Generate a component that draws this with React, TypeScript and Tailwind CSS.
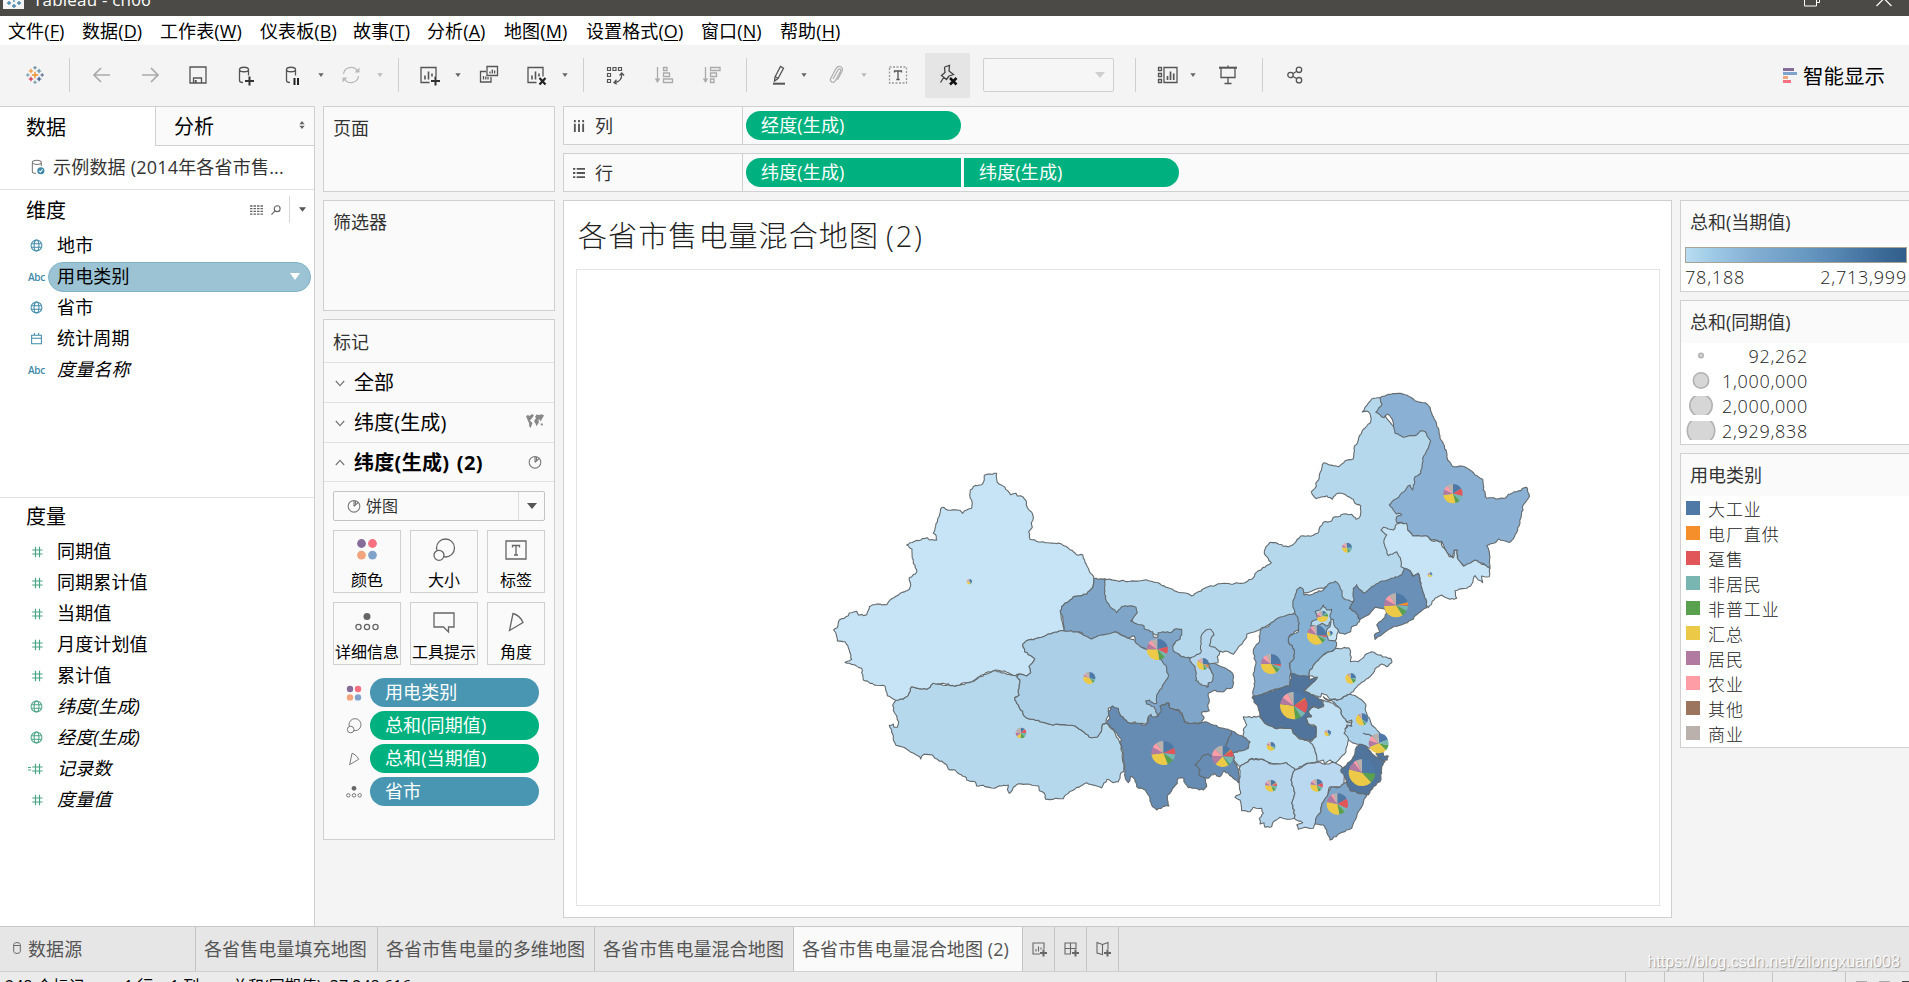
import type { ReactNode } from "react";

const UI = "font-['Open_Sans','Noto_Sans_CJK_SC',sans-serif]";

/* ---------- map geometry ---------- */

type Origin = "A" | "B" | "C" | "D";
const ORIGINS: Record<Origin, [number, number]> = {
  A: [800, 450],
  B: [1180, 380],
  C: [1180, 600],
  D: [1080, 560],
};
type Pt = [number, number];

const toPoint = (o: Origin, x: number, y: number): Pt => [ORIGINS[o][0] + x / 3, ORIGINS[o][1] + y / 3];

/* An outline is a list of "x,y" pairs; a letter switches the survey origin. */
function parseOutline(src: string): Pt[] {
  let origin: Origin = "A";
  const out: Pt[] = [];
  src.trim().split(/\s+/).forEach((tok) => {
    if (tok in ORIGINS) {
      origin = tok as Origin;
    } else {
      const [x, y] = tok.split(",").map(Number);
      out.push(toPoint(origin, x, y));
    }
  });
  return out;
}

const noise = (a: number, b: number) => {
  const s = Math.sin(Math.round(a) * 12.9898 + Math.round(b) * 78.233) * 43758.5453;
  return s - Math.floor(s) - 0.5;
};

/* Adds small irregularities so that borders read as surveyed lines. */
function outlinePath(src: string): string {
  const pts = parseOutline(src);
  const out: string[] = [];
  pts.forEach((p, i) => {
    const q = pts[(i + 1) % pts.length];
    const len = Math.hypot(q[0] - p[0], q[1] - p[1]);
    const n = Math.max(1, Math.round(len / 2.4));
    for (let k = 0; k < n; k++) {
      const x = p[0] + ((q[0] - p[0]) * k) / n;
      const y = p[1] + ((q[1] - p[1]) * k) / n;
      const dx = k ? noise(x, y) * 1.5 : 0;
      const dy = k ? noise(y, x) * 1.5 : 0;
      out.push(`${(x + dx).toFixed(1)} ${(y + dy).toFixed(1)}`);
    }
  });
  return `M${out.join("L")}Z`;
}

const PROVINCES: { name: string; fill: string; outline: string }[] = [
  { name: "西藏", fill: "#b5d8ec", outline: "A 288,751 310,747 325,735 335,710 380,718 400,700 465,709 515,695 580,662 640,676 658,672 650,680 660,690 655,720 658,735 645,742 650,760 678,803 720,815 750,823 825,828 850,845 868,862 892,861 900,850 908,822 920,820 940,840 960,880 968,910 972,965 962,970 955,995 940,998 921,988 905,1014 860,998 810,1024 790,1046 737,1048 733,1030 718,1022 716,1008 680,1002 655,1001 640,1012 628,1030 622,1018 625,1005 605,1008 575,1014 550,1006 530,1008 525,995 500,990 495,980 478,972 465,960 445,957 440,945 405,925 395,914 372,913 362,927 355,918 330,905 305,890 288,886 280,870 280,858 275,840 268,826 280,822 282,832 292,832 296,815 290,797 280,780 278,765" },
  { name: "新疆", fill: "#c6e4f5", outline: "A 553,76 570,72 590,70 590,88 597,102 615,112 632,134 648,130 652,138 668,140 678,152 682,172 697,190 700,205 694,218 697,232 686,245 690,268 715,276 750,279 783,281 805,294 830,315 848,314 850,325 862,350 868,364 881,380 878,413 860,433 820,440 803,457 785,470 782,490 788,520 792,542 745,552 725,562 685,570 668,583 674,605 704,626 687,650 692,668 680,678 658,672 640,676 620,667 600,662 580,662 545,675 515,695 490,698 465,709 430,700 400,700 380,718 335,710 325,735 310,747 288,751 262,737 255,708 230,706 190,690 185,655 165,645 135,637 155,628 148,600 135,575 112,573 108,550 101,540 112,533 118,510 145,497 148,489 170,484 177,496 200,494 208,470 218,464 260,464 270,450 300,430 328,418 332,404 328,383 350,366 337,325 336,297 320,285 330,278 382,263 388,270 410,270 409,258 400,250 405,235 426,172 445,181 480,181 488,190 500,180 515,175 517,160 511,145 511,120 520,110 545,104 553,90" },
  { name: "内蒙古", fill: "#b5d8ec", outline: "D 75,57 110,62 150,64 195,60 235,68 258,82 278,88 295,97 320,100 335,108 350,98 380,82 420,71 490,70 515,58 535,32 574,8 B 272,546 253,520 258,500 270,487 290,489 310,499 330,498 348,485 362,468 385,467 400,466 417,454 420,440 430,427 455,423 460,412 480,409 490,402 515,403 528,418 541,408 542,378 525,370 520,358 490,341 470,341 457,358 440,347 408,356 400,347 394,335 405,325 418,285 432,248 448,255 475,260 495,243 520,236 522,205 550,148 570,130 572,110 565,95 547,96 555,82 575,57 600,53 620,75 610,105 650,150 680,160 735,145 760,183 735,250 732,283 700,340 650,375 675,405 665,440 630,455 640,515 665,510 675,560 670,590 600,615 550,650 535,628 525,675 490,670 465,614 370,640 350,710 C 345,45 290,60 242,88 232,92 222,96 212,98 200,103 198,115 190,125 178,138 170,150 160,163 145,155 115,155 D 410,285 365,295 330,303 270,270 290,240 295,215 233,225 190,210 155,185 165,150 125,148 110,163 78,140 65,80" },
  { name: "青海", fill: "#abcfe6", outline: "A 792,542 825,542 875,566 905,552 945,545 985,565 1015,575 1030,595 1060,600 1095,630 1112,680 1095,715 1080,735 1078,758 1078,805 1058,812 1052,797 1043,805 1040,822 1025,820 1010,825 1005,815 990,820 975,810 960,795 955,780 938,769 925,775 928,790 920,805 918,820 908,822 900,850 892,861 868,862 850,845 825,828 750,823 720,815 678,803 650,760 645,742 658,735 655,720 660,690 650,680 658,672 680,678 692,668 687,650 704,626 674,605 668,583 685,570 725,562 745,552" },
  { name: "甘肃", fill: "#7fa5c8", outline: "D 41,56 75,56 74,80 76,115 90,140 110,158 125,140 150,137 168,142 172,158 152,183 165,190 192,197 193,207 218,215 220,230 233,232 234,218 250,215 270,218 290,206 305,208 305,225 295,240 280,255 280,272 300,287 317,293 332,295 345,310 352,340 372,375 385,380 388,355 400,345 392,330 386,316 388,307 410,313 445,330 458,340 460,355 457,383 440,385 428,396 400,392 385,400 388,420 383,435 388,452 365,457 372,475 365,487 330,491 315,485 308,465 298,450 270,445 268,430 255,433 242,440 245,455 232,475 228,450 222,440 200,432 197,422 208,420 218,428 230,430 230,405 245,385 248,375 265,350 260,325 245,300 225,285 205,270 185,262 165,245 163,228 145,235 108,215 85,222 65,224 35,237 10,225 0,216 -48,212 -52,170 -58,160 -55,140 -37,127 -20,110 20,103 38,83" },
  { name: "宁夏", fill: "#b5d6ec", outline: "D 362,245 365,225 378,210 392,208 402,225 392,240 388,257 405,262 420,275 412,290 414,308 385,310 388,325 400,345 398,362 385,368 382,382 362,372 347,362 349,340 345,320 332,305 328,297 345,288 362,278" },
  { name: "四川", fill: "#668cb3", outline: "D 80,490 90,475 85,455 97,438 115,445 122,468 150,490 175,490 195,495 205,487 205,470 213,463 220,472 232,470 243,455 240,438 255,435 265,428 270,445 298,452 308,470 318,488 350,492 375,485 400,495 430,505 455,513 450,530 438,555 455,570 440,600 400,600 375,600 360,615 365,640 375,655 380,680 370,690 345,685 325,683 315,670 312,655 295,655 292,670 283,680 270,700 263,705 267,738 248,740 230,750 218,740 210,715 195,690 170,680 165,658 153,648 145,668 138,660 133,625 130,580 120,545 125,540 110,518 90,498" },
  { name: "重庆", fill: "#668cb3", outline: "D 455,513 470,522 490,530 510,542 510,560 490,575 455,578 458,590 462,605 470,615 475,628 478,650 475,668 460,655 445,640 432,633 420,650 410,648 405,640 390,650 385,655 365,650 357,645 360,630 345,615 365,590 385,582 400,590 430,595 445,585 438,558" },
  { name: "河北", fill: "#85b1d4", outline: "B 345,700 338,665 350,630 360,622 370,628 372,645 390,645 405,638 430,630 445,612 465,604 480,620 490,655 520,665 510,685 525,695 540,718 C 530,75 515,80 512,95 495,103 480,100 470,85 455,100 470,130 462,150 445,155 430,165 405,190 390,210 388,230 365,235 332,225 328,190 342,175 343,150 325,125 328,108 355,95 357,70 343,50 340,40" },
  { name: "山西", fill: "#88aed2", outline: "C 242,88 265,80 285,60 305,50 343,40 350,48 357,70 355,90 328,108 325,125 343,150 342,175 328,190 332,220 330,258 300,265 270,272 240,285 217,293 220,270 225,245 220,220 228,190 220,160 225,140 235,130 240,105" },
  { name: "北京", fill: "#b5d8ec", outline: "C 395,65 415,55 405,35 420,30 430,15 440,30 455,28 450,50 455,65 440,78 425,70 410,80 392,78" },
  { name: "天津", fill: "#c6e4f5", outline: "C 452,60 460,58 462,75 475,90 470,110 465,122 445,120 440,105 440,90 450,80" },
  { name: "吉林", fill: "#c6e4f5", outline: "B 650,432 680,428 685,450 698,467 740,467 755,482 785,484 787,500 800,515 808,530 820,533 822,510 832,512 832,533 850,558 865,545 885,540 900,548 930,565 928,590 905,588 908,608 895,600 885,587 875,612 860,625 825,632 830,655 810,658 785,645 765,655 745,683 735,665 728,635 715,580 700,587 690,572 675,567 663,560 662,540 650,515 625,527 615,500 612,480 620,465 603,450 610,442 625,447 640,450" },
  { name: "黑龙江", fill: "#8ab0d3", outline: "B 600,53 620,45 660,40 680,45 705,62 735,68 750,82 755,100 768,125 783,180 798,210 803,240 820,260 845,258 870,270 885,285 908,298 910,330 920,355 975,355 985,343 1010,335 1040,322 1048,350 1030,375 1020,430 1005,465 990,487 955,477 945,488 920,497 930,530 930,563 905,548 885,540 852,558 832,535 832,510 822,510 818,533 800,515 785,484 755,480 740,467 698,467 683,450 680,430 650,427 650,410 665,405 655,400 650,402 628,375 660,345 690,315 698,330 705,290 722,280 728,235 745,205 752,183 735,155 722,152 710,165 670,172 645,160 637,118 622,103 612,113 587,97 606,72" },
  { name: "辽宁", fill: "#6a90b8", outline: "B 508,685 520,665 520,625 530,614 550,640 570,625 600,605 640,595 665,585 675,565 690,572 700,590 715,580 722,610 730,640 740,665 740,683 C 715,40 700,58 675,70 640,80 620,92 600,108 585,118 583,105 600,95 590,75 605,62 620,40 615,28 585,22 565,45 540,58 525,35" },
  { name: "江苏", fill: "#abd2ea", outline: "C 430,290 440,300 480,298 510,282 530,290 555,310 560,340 575,375 600,400 600,410 580,410 550,400 570,405 595,430 590,455 545,435 520,430 500,415 490,395 505,375 515,378 515,360 500,365 485,345 480,325 465,310" },
  { name: "山东", fill: "#b5d8ec", outline: "C 470,145 505,143 512,155 512,185 535,185 555,165 575,155 595,165 632,175 635,188 620,200 605,192 590,202 570,230 535,255 520,275 510,282 490,290 480,298 450,298 440,285 425,280 420,292 400,285 372,272 390,255 412,232 388,228 390,210 405,190 430,165 450,155" },
  { name: "安徽", fill: "#c2e0f3", outline: "C 425,300 440,305 460,310 480,325 485,345 502,368 515,365 515,378 500,375 492,400 505,415 500,440 498,455 480,475 465,490 450,480 435,492 430,480 412,487 408,460 400,440 385,430 408,410 408,380 385,370 378,352 392,350 385,335 400,320 415,325 430,320 430,305" },
  { name: "湖北", fill: "#bcdef1", outline: "C 190,350 215,353 238,348 255,370 285,385 335,385 340,400 360,418 388,425 400,440 405,455 412,485 380,490 345,508 325,500 320,488 300,492 275,490 250,478 215,475 195,490 180,500 165,485 158,460 205,445 210,425 190,410 190,390 200,375" },
  { name: "河南", fill: "#50749b", outline: "C 335,220 360,228 388,230 390,240 412,232 390,255 372,272 400,285 425,300 432,315 415,325 400,318 385,335 395,350 378,352 382,370 408,380 408,410 390,422 360,415 340,400 335,385 285,385 255,370 240,350 235,325 217,293 240,285 300,265 330,258" },
  { name: "湖南", fill: "#b5d6ed", outline: "C 180,500 195,490 215,477 250,480 275,492 300,492 320,488 345,510 333,540 345,580 335,610 343,630 343,655 320,658 300,652 280,665 275,680 255,682 252,668 240,672 238,655 250,640 245,625 220,622 210,635 185,632 180,600 165,592 182,580 178,545" },
  { name: "江西", fill: "#bad8f0", outline: "C 345,510 380,492 412,487 440,492 460,487 485,500 492,520 492,548 480,562 450,560 440,600 430,605 420,640 405,672 400,685 375,682 355,688 350,675 368,668 343,655 343,630 335,610 345,580 333,540" },
  { name: "浙江", fill: "#50749b", outline: "C 540,433 560,440 575,460 590,472 600,465 615,485 605,500 605,520 600,545 580,560 565,585 530,578 510,575 500,545 482,510 500,495 520,470 530,440" },
  { name: "福建", fill: "#7fa5c8", outline: "C 500,545 510,572 530,578 560,585 550,610 535,635 530,650 522,665 515,685 480,700 450,720 440,690 430,675 405,672 410,650 420,640 430,605 445,580 455,560 480,562" },
];

const ISLETS = "C 588,462 608,455 612,470 625,468 622,480 606,482 598,474";

const CATEGORIES = [
  { name: "大工业", hex: "#4e79a7", swatch: "bg-[#4e79a7]" },
  { name: "电厂直供", hex: "#f28e2b", swatch: "bg-[#f58f2c]" },
  { name: "趸售", hex: "#e15759", swatch: "bg-[#e15759]" },
  { name: "非居民", hex: "#76b7b2", swatch: "bg-[#7ab6b1]" },
  { name: "非普工业", hex: "#59a14f", swatch: "bg-[#59a14f]" },
  { name: "汇总", hex: "#edc948", swatch: "bg-[#edc948]" },
  { name: "居民", hex: "#b07aa1", swatch: "bg-[#b07aa1]" },
  { name: "农业", hex: "#ff9da7", swatch: "bg-[#ff9da7]" },
  { name: "其他", hex: "#9c755f", swatch: "bg-[#9c755f]" },
  { name: "商业", hex: "#bab0ac", swatch: "bg-[#bab0ac]" },
];

/* [origin, x, y, radius, share of each category] */
const PIES: [Origin, number, number, number, number[]][] = [
  ["A", 508, 395, 8, [33, 0, 0, 6, 5, 33, 3, 12, 0, 8]],
  ["A", 663, 849, 16, [12, 0, 13, 12, 14, 14, 12, 3, 0, 20]],
  ["A", 868, 684, 18, [29, 0, 0, 5, 6, 40, 4, 5, 0, 11]],
  ["A", 1072, 598, 32, [21, 0, 11, 6, 9, 28, 9, 7, 0, 9]],
  ["A", 1090, 909, 36, [18, 0, 9, 8, 9, 29, 10, 7, 0, 10]],
  ["C", 128, 469, 32, [14, 2, 10, 12, 3, 21, 14, 11, 0, 13]],
  ["C", 69, 192, 18, [28, 6, 2, 5, 7, 36, 3, 5, 0, 8]],
  ["B", 501, 503, 15, [25, 0, 0, 15, 8, 28, 8, 8, 0, 8]],
  ["B", 819, 341, 29, [16, 0, 13, 9, 8, 27, 9, 8, 0, 10]],
  ["B", 750, 584, 7, [25, 0, 0, 7, 3, 38, 8, 5, 0, 14]],
  ["B", 648, 676, 36, [21, 4, 1, 7, 8, 33, 9, 8, 0, 9]],
  ["C", 427, 49, 17, [12, 0, 0, 5, 9, 46, 8, 8, 0, 12]],
  ["C", 450, 100, 8, [38, 0, 0, 8, 8, 34, 4, 3, 0, 5]],
  ["C", 410, 105, 29, [26, 0, 3, 4, 7, 39, 10, 5, 0, 6]],
  ["C", 273, 192, 30, [25, 0, 4, 5, 7, 34, 10, 7, 0, 8]],
  ["C", 341, 317, 41, [15, 2, 17, 7, 7, 29, 8, 8, 0, 7]],
  ["C", 512, 235, 16, [24, 0, 0, 5, 13, 48, 3, 2, 0, 5]],
  ["C", 546, 358, 18, [35, 0, 0, 4, 6, 45, 3, 2, 0, 5]],
  ["C", 596, 430, 30, [19, 0, 0, 9, 9, 32, 11, 8, 0, 12]],
  ["C", 546, 518, 40, [26, 0, 0, 0, 12, 41, 10, 4, 0, 7]],
  ["C", 443, 399, 10, [33, 0, 0, 7, 5, 37, 6, 5, 0, 7]],
  ["C", 273, 439, 13, [27, 0, 0, 5, 5, 44, 6, 5, 0, 8]],
  ["C", 273, 557, 18, [16, 3, 7, 9, 9, 32, 8, 6, 0, 10]],
  ["C", 410, 556, 19, [19, 0, 12, 7, 8, 31, 8, 6, 0, 9]],
  ["C", 472, 612, 32, [17, 0, 15, 6, 9, 31, 12, 4, 0, 6]],
];

function Pie({ pie }: { pie: (typeof PIES)[number] }) {
  const [origin, px, py, pr, shares] = pie;
  const [cx, cy] = toPoint(origin, px, py);
  const r = pr / 3;
  const total = shares.reduce((s, v) => s + v, 0);
  let acc = 0;
  return (
    <g>
      {shares.map((v, i) => {
        if (!v) return null;
        const a0 = (acc / total) * Math.PI * 2;
        acc += v;
        const a1 = (acc / total) * Math.PI * 2;
        const d = `M${cx} ${cy}L${cx + r * Math.sin(a0)} ${cy - r * Math.cos(a0)}A${r} ${r} 0 ${a1 - a0 > Math.PI ? 1 : 0} 1 ${cx + r * Math.sin(a1)} ${cy - r * Math.cos(a1)}Z`;
        return <path key={i} d={d} fill={CATEGORIES[i].hex} />;
      })}
    </g>
  );
}

function ChinaMap() {
  return (
    <svg viewBox="577 270 1082 635" className="block h-full w-full">
      <g stroke="#646a6d" strokeWidth="1.1" strokeLinejoin="round">
        {PROVINCES.map((p) => (
          <path key={p.name} d={outlinePath(p.outline)} fill={p.fill} />
        ))}
        <path d={outlinePath(ISLETS)} fill="#50749b" />
      </g>
      {PIES.map((p, i) => (
        <Pie key={i} pie={p} />
      ))}
    </svg>
  );
}

/* ---------- icons ---------- */

function Ico({ children, c = "text-[#555]", s = "size-6" }: { children: ReactNode; c?: string; s?: string }) {
  return (
    <svg viewBox="0 0 24 24" fill="none" stroke="currentColor" strokeWidth="1.3" className={`${s} ${c} block shrink-0`}>
      {children}
    </svg>
  );
}

const Caret = ({ c = "fill-[#666]" }: { c?: string }) => (
  <svg viewBox="0 0 8 6" className={`h-[4px] w-[6px] shrink-0 ${c}`}>
    <path d="M0 0.5h8L4 6z" />
  </svg>
);

const Logo = () => (
  <svg viewBox="0 0 20 20" className="h-[18px] w-[18px] shrink-0" strokeWidth="1.2" fill="none">
    <path d="M10 6.5v7M6.5 10h7" stroke="#eb912c" strokeWidth="1.5" />
    <path d="M5.5 3v5M3 5.5h5" stroke="#eb912c" />
    <path d="M14.5 3v5M12 5.5h5" stroke="#59879b" />
    <path d="M5.5 12v5M3 14.5h5" stroke="#c72035" />
    <path d="M14.5 12v5M12 14.5h5" stroke="#1f447e" />
    <path d="M10 0v4M8 2h4" stroke="#5b879b" />
    <path d="M10 16v4M8 18h4" stroke="#7099a6" />
    <path d="M2 8v4M0 10h4" stroke="#7099a6" />
    <path d="M18 8v4M16 10h4" stroke="#5b6591" />
  </svg>
);

const Save = () => (
  <Ico>
    <path d="M4 4h16v16H4zM7.5 20v-5h8v5" />
    <path d="M8.7 17v3h2v-3z" fill="currentColor" stroke="none" />
  </Ico>
);
const Plus = ({ x = 17, y = 18 }: { x?: number; y?: number }) => (
  <path d={`M${x} ${y - 4.5}v9M${x - 4.5} ${y}h9`} stroke="#333" strokeWidth="2" />
);
const DbBody = () => <path d="M6.5 6.5v11c0 1.3 1 2 3.5 2M15.5 6.5v6M6.5 6.5c0-3 9-3 9 0s-9 3-9 0z" />;
const DbAdd = () => (
  <Ico>
    <DbBody />
    <Plus x={16.5} y={18} />
  </Ico>
);
const DbPause = () => (
  <Ico>
    <DbBody />
    <path d="M14.5 15v7M18 15v7" stroke="#222" strokeWidth="2" />
  </Ico>
);
const Refresh = () => (
  <Ico c="text-[#b9b9b9]">
    <path d="M4.5 11a7.6 7.6 0 0 1 14-3M19.5 13a7.6 7.6 0 0 1-14 3" />
    <path d="M20.5 4.5v5h-5zM3.5 19.5v-5h5z" fill="currentColor" stroke="none" />
  </Ico>
);
const ChartFrame = () => (
  <>
    <path d="M12.5 19.5H4V4.5h15v9" />
    <path d="M8 16.5v-4M11.5 16.5v-8M15 13.5v-3" strokeWidth="1.6" />
  </>
);
const ChartAdd = () => (
  <Ico>
    <ChartFrame />
    <Plus x={18.5} y={18} />
  </Ico>
);
const ChartClear = () => (
  <Ico>
    <ChartFrame />
    <path d="M15.5 15l6 6.5M21.5 15l-6 6.5" stroke="#222" strokeWidth="2.2" />
  </Ico>
);
const Duplicate = () => (
  <Ico>
    <path d="M10 12.5V3.5h10.500v9zM9 8.5H3.5v10.500H14v-5" />
    <path d="M13 10.5v-2M15.3 10.5v-4M17.6 10.5v-3M6.5 16.5v-3.500M8.8 16.5v-3M11 16.5v-2.500" />
  </Ico>
);
const Swap = () => (
  <Ico>
    <path d="M4.5 4.5h3v3h-3zM10 4.5h3v3h-3zM15.5 4.5h3v3h-3zM4.5 10.5h3v3h-3zM4.5 16.5h3v3h-3z" strokeWidth="1.2" />
    <path d="M18.8 11c0 5-2.5 8-7 8.5M16.5 12.5l2.300-2.500 2.300 2.500M13.5 16.8l-2.500 2.700 2.800 1.700" />
  </Ico>
);
const SortAsc = () => (
  <Ico c="text-[#aaa]">
    <path d="M5.5 4v15M11.5 4.5h3.500v3h-3.500zM11.5 10h6v3.500h-6zM11.5 16h9v3.500h-9z" />
    <path d="M2.8 15.5h5.400L5.5 20z" fill="currentColor" stroke="none" />
  </Ico>
);
const SortDesc = () => (
  <Ico c="text-[#aaa]">
    <path d="M5.5 4v15M10.5 4.5h9.500v3h-9.500zM10.5 10h6v3.500h-6zM10.5 16h3.500v3.500h-3.500z" />
    <path d="M2.8 15.5h5.400L5.5 20z" fill="currentColor" stroke="none" />
  </Ico>
);
const Highlighter = () => (
  <Ico>
    <path d="M8 14L13.5 3.5l3 1.700L11 15.5l-3.500 2.500zM8 13.5l3 1.800" />
    <path d="M6 20.7h12" strokeWidth="2" />
  </Ico>
);
const Clip = () => (
  <Ico c="text-[#b0b0b0]">
    <path d="M9 16l5-9c1.200-2 3.500-.8 2.500 1.300l-5 9.200c-2 3.500-6.500 1.200-4.700-2.300L12 5.500c2.500-4 8-1.500 6 2.700l-4.500 8.500" />
  </Ico>
);
const TextLabel = () => (
  <Ico>
    <path d="M3.5 4h17v16h-17z" strokeDasharray="2 1.5" stroke="#999" />
    <path d="M8.5 9.5V8h7v1.500M12 8v8.500M10.3 16.5h3.400" />
  </Ico>
);
const PinOff = () => (
  <Ico c="text-[#444]">
    <path d="M8.5 4l5-1.500-.5 5.500 4.500 3.500-4.500 1.500M8.5 4L9 9.500l-3.500 3 5 4 2.500-3.500M8 14l-3.500 5.500" />
    <path d="M14 15l6.500 6.500M20.5 15L14 21.5" stroke="#111" strokeWidth="2.5" />
  </Ico>
);
const Cards = () => (
  <Ico>
    <path d="M8 4.5h13v15H8zM2.5 4.5h3v3h-3zM2.5 10.5h3v3h-3zM2.5 16.5h3v3h-3z" />
    <path d="M11.5 17v-4M14.5 17V8.500M17.7 17v-6.500" strokeWidth="1.7" />
  </Ico>
);
const Present = () => (
  <Ico>
    <path d="M3 4.7h18" strokeWidth="2" />
    <path d="M5 5v9.500h14V5M12 2.5v2M12 14.5v6M8.5 20.5h7" />
  </Ico>
);
const Share = () => (
  <Ico s="size-6">
    <circle cx="7.5" cy="12" r="2.7" />
    <circle cx="16" cy="6.8" r="2.7" />
    <circle cx="16" cy="17.2" r="2.7" />
    <path d="M9.8 10.7l4-2.500M9.8 13.3l4 2.500" />
  </Ico>
);

const Globe = ({ c = "text-[#3f8aa8]" }: { c?: string }) => (
  <Ico s="size-[13px]" c={c}>
    <g strokeWidth="1.9">
      <circle cx="12" cy="12" r="10" />
      <ellipse cx="12" cy="12" rx="4.5" ry="10" />
      <path d="M3 8.7h18M3 15.3h18" />
    </g>
  </Ico>
);
const Hash = ({ calc = false }: { calc?: boolean }) => (
  <svg viewBox="0 0 20 12" className="h-3 w-5 shrink-0 text-[#4aa585]" stroke="currentColor" strokeWidth="1.2" fill="none">
    <path d="M8.5 .8v10.400M12.5 .8v10.400M5.2 4h10.400M5.2 8h10.400" />
    {calc && <path d="M1 4.5h3M1 7h3" />}
  </svg>
);
const Calendar = () => (
  <Ico s="size-[13px]" c="text-[#3f8aa8]">
    <path d="M3 6h18v15.500H3zM3 11.5h18M8 2v5M16 2v5" strokeWidth="1.9" />
  </Ico>
);
const Abc = () => <span className="text-[10px] leading-none font-semibold tracking-tight text-[#3f8aa8]">Abc</span>;

const Dots = ({ s }: { s: string }) => (
  <svg viewBox="0 0 20 20" className={`${s} shrink-0`}>
    <circle cx="5" cy="5" r="4" fill="#866c98" />
    <circle cx="15" cy="5" r="4" fill="#f7707f" />
    <circle cx="5" cy="15.5" r="4" fill="#f2a47c" />
    <circle cx="15" cy="15.5" r="4" fill="#80a3cc" />
  </svg>
);
const SizeIcon = ({ s }: { s: string }) => (
  <Ico s={s} c="text-[#666]">
    <circle cx="13.5" cy="10" r="9" />
    <circle cx="7" cy="17.3" r="5" className="fill-[#fafafa]" />
  </Ico>
);
const LabelIcon = () => (
  <Ico s="size-6" c="text-[#666]">
    <path d="M2 3h20v18H2zM8.5 9.5V7.500h7v2M12 7.5V17M10 17h4" />
  </Ico>
);
const Detail = ({ s }: { s: string }) => (
  <Ico s={s} c="text-[#666]">
    <circle cx="12" cy="6.5" r="3.5" fill="currentColor" stroke="none" />
    <circle cx="3.5" cy="17" r="2.6" />
    <circle cx="12" cy="17" r="2.6" />
    <circle cx="20.5" cy="17" r="2.6" />
  </Ico>
);
const Tooltip = () => (
  <Ico s="size-6" c="text-[#666]">
    <path d="M2 3h20v14h-5.500v5l-5-5H2z" />
  </Ico>
);
const Angle = ({ s }: { s: string }) => (
  <Ico s={s} c="text-[#666]">
    <path d="M9 3.5l-3.500 17L19 12.500C17 8 13 4.500 9 3.500z" />
  </Ico>
);
const PieIcon = () => (
  <Ico s="size-[14px]" c="text-[#777]">
    <circle cx="12" cy="12.5" r="10" strokeWidth="1.8" />
    <path d="M12 12.5V3M12 12.5l7-6.500M14.5 3.5v6" strokeWidth="1.9" />
  </Ico>
);
const WorldIcon = () => (
  <svg viewBox="0 0 18 15" className="h-[15px] w-[18px] fill-[#888]">
    <path d="M0 2l2-1 1.500 1L6 0l2 1.500-1.500 2L5 5.500 3.800 6.500 6.500 9l-.8 2L4.500 14l-1.200-1.500L3 9 2 7 1 4.500zM9 3l1.500-2.500L13 1l3-.7 2 1.200-1 1.700-1.300 2-.7 2.300L13.500 5.500l-1.300.2.800 2.300-1.200 2.300-1.300 2L9.500 9.500 8.200 8 8.700 5.500l1.500-1zM14.700 9.300l2.300.4-.3 1.800-1.900-.3z" />
  </svg>
);
const Chevron = ({ up = false }: { up?: boolean }) => (
  <svg viewBox="0 0 12 8" className="h-[7px] w-[10px] shrink-0" fill="none" stroke="#777" strokeWidth="1.5">
    <path d={up ? "M1 7l5-5.500L11 7" : "M1 1l5 5.500L11 1"} />
  </svg>
);

const Sep = ({ m }: { m: string }) => <div className={`h-[34px] w-px shrink-0 bg-[#cfcfcf] ${m}`} />;
const At = ({ m, children }: { m: string; children: ReactNode }) => <div className={`shrink-0 ${m}`}>{children}</div>;
const CaretAt = ({ m, c }: { m: string; c?: string }) => (
  <div className={`flex w-2 shrink-0 justify-center ${m}`}>
    <Caret c={c} />
  </div>
);

/* ---------- bars ---------- */

function TitleBar() {
  return (
    <div className="flex h-4 shrink-0 items-end overflow-hidden bg-[#4b4a47]">
      <div className="ml-[3px] flex h-[30px] w-[21px] -translate-y-[7px] items-end justify-center bg-[#f4f4f4] pb-px">
        <svg viewBox="0 0 16 16" className="size-4" stroke="#4a87ad" strokeWidth="1.3">
          <path d="M8 4v6M5 7h6M3 1v4M1 3h4M13 1v4M11 3h4M3 9v4M1 11h4M13 9v4M11 11h4M8 12v4M6 14h4" />
        </svg>
      </div>
      <div className="ml-[9px] -translate-y-[7px] text-[17px] leading-[18px] tracking-[0.2px] text-white">Tableau - ch06</div>
      <svg viewBox="0 0 16 16" className="mr-[56px] ml-auto size-4 -translate-y-[9px]" fill="none" stroke="#fff">
        <path d="M.5 3h12v12H.5zM3.5 3V.5h12v11H13" />
      </svg>
      <svg viewBox="0 0 16 16" className="mr-[17px] size-4 -translate-y-[9px]" stroke="#fff" strokeWidth="1.2">
        <path d="M.5 0L15.5 15M15.5 0L.5 15" />
      </svg>
    </div>
  );
}

const MENUS: [string, string, string][] = [
  ["文件", "F", "w-[74px]"],
  ["数据", "D", "w-[78px]"],
  ["工作表", "W", "w-[100px]"],
  ["仪表板", "B", "w-[93px]"],
  ["故事", "T", "w-[74px]"],
  ["分析", "A", "w-[77px]"],
  ["地图", "M", "w-[82px]"],
  ["设置格式", "O", "w-[115px]"],
  ["窗口", "N", "w-[79px]"],
  ["帮助", "H", "w-[80px]"],
];

function MenuBar() {
  return (
    <div className="flex h-[29px] shrink-0 items-center bg-white pt-[2px] pl-2 text-[18px] tracking-[0.1px] text-black">
      {MENUS.map(([label, key, w]) => (
        <div key={key} className={`shrink-0 whitespace-nowrap ${w}`}>
          {label}(<span className="underline decoration-1 underline-offset-2">{key}</span>)
        </div>
      ))}
    </div>
  );
}

function Toolbar() {
  return (
    <div className="flex h-[61px] shrink-0 items-center bg-[#f4f4f4] pb-px">
      <At m="ml-[26px] mr-[25px]"><Logo /></At>
      <Sep m="" />
      <At m="ml-5"><Ico c="text-[#aaa]"><path d="M20 12H4.500M11 5l-7 7 7 7" strokeWidth="1.7" /></Ico></At>
      <At m="ml-6"><Ico c="text-[#aaa]"><path d="M4 12h15.500M13 5l7 7-7 7" strokeWidth="1.7" /></Ico></At>
      <At m="ml-6"><Save /></At>
      <At m="ml-[23px]"><DbAdd /></At>
      <At m="ml-[23px]"><DbPause /></At>
      <CaretAt m="ml-[13px]" />
      <At m="ml-[14px]"><Refresh /></At>
      <CaretAt m="ml-[13px]" c="fill-[#bbb]" />
      <Sep m="ml-[14px]" />
      <At m="ml-[18px]"><ChartAdd /></At>
      <CaretAt m="ml-[13px]" />
      <At m="ml-[15px]"><Duplicate /></At>
      <At m="ml-[23px]"><ChartClear /></At>
      <CaretAt m="ml-[13px]" />
      <Sep m="ml-[14px]" />
      <At m="ml-[19px]"><Swap /></At>
      <At m="ml-[25px]"><SortAsc /></At>
      <At m="ml-6"><SortDesc /></At>
      <Sep m="ml-[22px]" />
      <At m="ml-5"><Highlighter /></At>
      <CaretAt m="ml-[9px]" />
      <At m="ml-4"><Clip /></At>
      <CaretAt m="ml-3" c="fill-[#bbb]" />
      <At m="ml-[18px]"><TextLabel /></At>
      <div className="ml-[15px] flex h-[45px] w-[45px] shrink-0 items-center justify-center bg-[#e5e5e5]"><PinOff /></div>
      <div className="ml-[13px] flex h-[34px] w-[131px] shrink-0 items-center justify-end rounded-[2px] border border-[#d0d0d0] bg-[#f6f6f6] pr-[8px]">
        <svg viewBox="0 0 10 6" className="h-[6px] w-[10px] fill-[#cfcfcf]"><path d="M0 0h10L5 6z" /></svg>
      </div>
      <Sep m="ml-[21px]" />
      <At m="ml-5"><Cards /></At>
      <CaretAt m="ml-[9px]" />
      <At m="ml-[19px]"><Present /></At>
      <Sep m="ml-[22px]" />
      <At m="ml-5"><Share /></At>
      <div className="mr-[24px] ml-auto flex items-center gap-[6px]">
        <div className="flex flex-col gap-px">
          <div className="h-[3px] w-[11px] bg-[#866c98]" />
          <div className="h-[3px] w-[14px] bg-[#80a3cc]" />
          <div className="h-[3px] w-[5px] bg-[#f2a47c]" />
          <div className="h-[3px] w-[8px] bg-[#f7707f]" />
        </div>
        <span className="pt-px text-[20.5px] leading-6 text-black">智能显示</span>
      </div>
    </div>
  );
}

/* ---------- data pane ---------- */

type Field = { name: string; icon: ReactNode; italic?: boolean; active?: boolean };

const DIMENSIONS: Field[] = [
  { name: "地市", icon: <Globe /> },
  { name: "用电类别", icon: <Abc />, active: true },
  { name: "省市", icon: <Globe /> },
  { name: "统计周期", icon: <Calendar /> },
  { name: "度量名称", icon: <Abc />, italic: true },
];
const MEASURES: Field[] = [
  { name: "同期值", icon: <Hash /> },
  { name: "同期累计值", icon: <Hash /> },
  { name: "当期值", icon: <Hash /> },
  { name: "月度计划值", icon: <Hash /> },
  { name: "累计值", icon: <Hash /> },
  { name: "纬度(生成)", icon: <Globe c="text-[#4aa585]" />, italic: true },
  { name: "经度(生成)", icon: <Globe c="text-[#4aa585]" />, italic: true },
  { name: "记录数", icon: <Hash calc />, italic: true },
  { name: "度量值", icon: <Hash />, italic: true },
];

function FieldRow({ f }: { f: Field }) {
  return (
    <div className="flex h-[31px] items-center">
      <div className="flex w-[48px] shrink-0 justify-center pl-[25px]"><div className="flex w-5 shrink-0 justify-center">{f.icon}</div></div>
      <div
        className={`flex h-[30px] w-[263px] items-center rounded-full border pl-[8px] text-[18px] tracking-[0.15px] text-black ${
          f.active ? "border-[#7fb2c6] bg-[#9bc3d4]" : "border-transparent"
        } ${f.italic ? "italic" : ""}`}
      >
        {f.name}
        {f.active && <svg viewBox="0 0 10 7" className="mr-[10px] ml-auto h-[7px] w-[10px] fill-white"><path d="M0 0h10L5 7z" /></svg>}
      </div>
    </div>
  );
}

function DataPane() {
  return (
    <div className="flex w-[315px] shrink-0 flex-col border-t border-r border-[#d0d0d0] bg-white">
      <div className="flex h-[39px] shrink-0 text-[20px] leading-none text-black">
        <div className="flex w-[155px] items-center pt-[2px] pl-[26px]">数据</div>
        <div className="flex flex-1 items-center border-b border-l border-[#d0d0d0] bg-[#fafafa] pt-[2px] pl-[18px]">
          分析
          <svg viewBox="0 0 6 9" className="mr-[9px] mb-1 ml-auto h-[8px] w-[6px] fill-[#666]"><path d="M3 0l3 3.700H0zM3 9L0 5.300h6z" /></svg>
        </div>
      </div>
      <div className="flex h-[44px] shrink-0 items-center border-b border-[#e0e0e0] pb-px pl-[31px] text-[18px] tracking-[0.2px] text-[#333]">
        <svg viewBox="0 0 14 17" className="mr-[8px] h-[16px] w-[14px] shrink-0" fill="none" stroke="#777" strokeWidth="1.1">
          <path d="M1 3.5v10c0 1 1.500 1.700 4 1.700M10.5 3.5v4M1 3.5c0-3 9.500-3 9.500 0s-9.500 3-9.500 0z" />
          <circle cx="10" cy="12.5" r="3.8" fill="#3f8aa8" stroke="none" />
          <path d="M8.2 12.5l1.300 1.400 2.400-2.800" stroke="#fff" />
        </svg>
        <span className="whitespace-nowrap">示例数据 (2014年各省市售...</span>
      </div>
      <div className="flex h-10 shrink-0 items-center pt-[2px] pl-[26px] text-[20px] text-black">
        维度
        <svg viewBox="0 0 13 10" className="mb-[3px] ml-auto h-[10px] w-[13px]" stroke="#666" strokeWidth="1.3" strokeDasharray="2.5 1">
          <path d="M0 1h13M0 3.7h13M0 6.4h13M0 9.1h13" />
        </svg>
        <svg viewBox="0 0 11 11" className="mb-[3px] ml-[8px] h-[10px] w-[10px]" fill="none" stroke="#666" strokeWidth="1.3">
          <circle cx="6.8" cy="4" r="3.2" />
          <path d="M4.5 6.5L.5 10.500" />
        </svg>
        <div className="mb-[3px] ml-[8px] h-[27px] w-px bg-[#d8d8d8]" />
        <svg viewBox="0 0 8 5" className="mr-[8px] mb-[3px] ml-[9px] h-[5px] w-[7px] fill-[#555]"><path d="M0 0h8L4 5z" /></svg>
      </div>
      <div className="h-[268px] shrink-0 border-b border-[#e0e0e0]">
        {DIMENSIONS.map((f) => <FieldRow key={f.name} f={f} />)}
      </div>
      <div className="flex h-[38px] shrink-0 items-center pl-[26px] text-[20px] text-black">度量</div>
      <div>{MEASURES.map((f) => <FieldRow key={f.name} f={f} />)}</div>
    </div>
  );
}

/* ---------- cards ---------- */

function MarkButton({ icon, label }: { icon: ReactNode; label: string }) {
  return (
    <div className="flex h-[63px] flex-col items-center justify-between border border-[#d0d0d0] bg-[#fafafa] pt-[7px] text-[16px] leading-6 tracking-[0.05px] whitespace-nowrap text-black">
      {icon}
      <span>{label}</span>
    </div>
  );
}

function MarkPill({ icon, label, bg }: { icon: ReactNode; label: string; bg: string }) {
  return (
    <div className="flex h-[29px] items-center">
      <div className="ml-[20px] flex w-5 shrink-0 justify-center">{icon}</div>
      <div className={`ml-[6px] flex h-[29px] w-[169px] items-center rounded-full pl-[15px] text-[18px] tracking-[0.1px] text-white ${bg}`}>{label}</div>
    </div>
  );
}

function CardsColumn() {
  return (
    <div className="ml-2 flex w-[232px] shrink-0 flex-col gap-2 text-[#333]">
      <div className="h-[86px] shrink-0 border border-[#d0d0d0] bg-[#fafafa] pt-[8px] pl-[9px] text-[18px]">页面</div>
      <div className="h-[111px] shrink-0 border border-[#d0d0d0] bg-[#fafafa] pt-[8px] pl-[9px] text-[18px]">筛选器</div>
      <div className="flex h-[521px] shrink-0 flex-col border border-[#d0d0d0] bg-[#fafafa]">
        <div className="flex h-[43px] items-center border-b border-[#e2e2e2] pt-[2px] pl-[9px] text-[18px]">标记</div>
        <div className="flex h-10 items-center gap-[9px] border-b border-[#e2e2e2] pt-px pl-[11px] text-[20px] text-black"><Chevron />全部</div>
        <div className="flex h-10 items-center gap-[9px] border-b border-[#e2e2e2] pt-px pr-[10px] pl-[11px] text-[20px] tracking-[0.1px] text-black">
          <Chevron />纬度(生成)<span className="mb-1 ml-auto"><WorldIcon /></span>
        </div>
        <div className="flex h-[39px] items-center gap-[9px] border-b border-[#e2e2e2] pt-px pr-[12px] pl-[11px] text-[20px] font-bold tracking-[0.3px] whitespace-nowrap text-black [word-spacing:2px]">
          <Chevron up />纬度(生成) (2)<span className="mb-px ml-auto"><PieIcon /></span>
        </div>
        <div className="mx-[9px] mt-[9px] flex h-[30px] items-center rounded-[2px] border border-[#c4c4c4] pl-[13px] text-[16px] text-[#333]">
          <PieIcon />
          <span className="ml-[5px]">饼图</span>
          <div className="ml-auto flex h-full w-[26px] items-center justify-center border-l border-[#dcdcdc]">
            <svg viewBox="0 0 10 6" className="h-[6px] w-[10px] fill-[#555]"><path d="M0 0h10L5 6z" /></svg>
          </div>
        </div>
        <div className="mx-[9px] mt-[9px] grid grid-cols-[68px_68px_58px] gap-x-[9px] gap-y-[9px]">
          <MarkButton icon={<Dots s="size-[22px]" />} label="颜色" />
          <MarkButton icon={<SizeIcon s="size-6" />} label="大小" />
          <MarkButton icon={<LabelIcon />} label="标签" />
          <MarkButton icon={<Detail s="size-6" />} label="详细信息" />
          <MarkButton icon={<Tooltip />} label="工具提示" />
          <MarkButton icon={<Angle s="size-6" />} label="角度" />
        </div>
        <div className="mt-[13px] flex flex-col gap-1">
          <MarkPill icon={<Dots s="size-[16px]" />} label="用电类别" bg="bg-[#4996b2]" />
          <MarkPill icon={<SizeIcon s="size-[16px]" />} label="总和(同期值)" bg="bg-[#00b180]" />
          <MarkPill icon={<Angle s="size-[16px]" />} label="总和(当期值)" bg="bg-[#00b180]" />
          <MarkPill icon={<Detail s="size-[16px]" />} label="省市" bg="bg-[#4996b2]" />
        </div>
      </div>
    </div>
  );
}

/* ---------- worksheet ---------- */

function Shelf({ icon, label, children }: { icon: ReactNode; label: string; children: ReactNode }) {
  return (
    <div className="flex h-[39px] shrink-0 border border-r-0 border-[#d0d0d0] bg-[#fafafa]">
      <div className="flex w-[179px] items-center gap-[10px] border-r border-[#d0d0d0] pt-px pl-[9px] text-[18px] text-[#333]">{icon}{label}</div>
      <div className="flex items-center gap-[3px] pl-[3px] text-[18px] tracking-[0.15px] text-white">{children}</div>
    </div>
  );
}

function Legends() {
  return (
    <div className="flex w-[229px] shrink-0 flex-col gap-2 text-[18px] text-[#333]">
      <div className="h-[92px] shrink-0 border border-r-0 border-[#d0d0d0] bg-white">
        <div className="flex h-[42px] items-center bg-[#fafafa] pl-[9px]">总和(当期值)</div>
        <div className="mt-[4px] ml-[4px] h-[16px] w-[222px] border border-[#aaa294] bg-[linear-gradient(to_right,#b9ddf1,#9fcae6_12%,#84afd3_30%,#6798c1_55%,#4776a4_80%,#305d89)]" />
        <div className="flex justify-between pt-px pr-[2px] pl-[4px] text-[18px] leading-[27px] font-light tracking-[0.8px] text-[#222]"><span>78,188</span><span>2,713,999</span></div>
      </div>
      <div className="h-[145px] shrink-0 border border-r-0 border-[#d0d0d0] bg-white">
        <div className="flex h-[42px] items-center bg-[#fafafa] pl-[9px]">总和(同期值)</div>
        {[
          ["92,262", 2.2],
          ["1,000,000", 7.7],
          ["2,000,000", 11.2],
          ["2,929,838", 13.7],
        ].map(([t, r]) => (
          <div key={t} className="flex h-[25px] items-center">
            <svg viewBox="0 0 32 19" className="ml-[4px] h-[19px] w-8">
              <circle cx="16" cy="9.5" r={r} fill="#d6d6d6" stroke="#b2b2b2" strokeWidth="1.6" />
            </svg>
            <span className="w-[91px] pt-[2px] text-right text-[18px] font-light tracking-[0.7px] text-[#222]">{t}</span>
          </div>
        ))}
      </div>
      <div className="h-[295px] shrink-0 border border-r-0 border-[#d0d0d0] bg-white">
        <div className="flex h-[42px] items-center bg-[#fafafa] pl-[9px]">用电类别</div>
        {CATEGORIES.map((c) => (
          <div key={c.name} className="flex h-[25px] items-center pb-px">
            <div className={`ml-[5px] size-[14px] ${c.swatch}`} />
            <span className="ml-[8px] pt-[3px] text-[17px] font-light tracking-[0.9px] text-[#222]">{c.name}</span>
          </div>
        ))}
      </div>
    </div>
  );
}

function Worksheet() {
  const pill = "flex h-[29px] w-[215px] items-center bg-[#00b180] pl-[15px]";
  return (
    <div className="ml-2 flex min-w-0 flex-1 flex-col gap-2">
      <Shelf
        label="列"
        icon={<svg viewBox="0 0 13 13" className="size-3" stroke="#555" strokeWidth="2"><path d="M2 4v9M6.5 4v9M11 4v9M2 0v2.500M6.5 0v2.500M11 0v2.500" /></svg>}
      >
        <div className={`${pill} rounded-full`}>经度(生成)</div>
      </Shelf>
      <Shelf
        label="行"
        icon={<svg viewBox="0 0 13 13" className="size-3" stroke="#555" strokeWidth="2"><path d="M4 2h9M4 6.5h9M4 11h9M0 2h2.500M0 6.5h2.500M0 11h2.500" /></svg>}
      >
        <div className={`${pill} rounded-l-full`}>纬度(生成)</div>
        <div className={`${pill} rounded-r-full`}>纬度(生成)</div>
      </Shelf>
      <div className="flex gap-2">
        <div className="flex h-[718px] w-[1109px] shrink-0 flex-col border border-[#d0d0d0] bg-white pr-[11px] pb-[11px] pl-3">
          <div className="flex h-[68px] shrink-0 items-center pt-[2px] pl-[2px] text-[29px] font-light tracking-[1.1px] whitespace-nowrap text-[#222]">
            各省市售电量混合地图<span className="ml-[7px] tracking-[1.8px]">(2)</span>
          </div>
          <div className="min-h-0 flex-1 border border-[#e4e4e4]"><ChinaMap /></div>
        </div>
        <Legends />
      </div>
    </div>
  );
}

/* ---------- footer ---------- */

const TABS: [string, string][] = [
  ["各省售电量填充地图", "w-[182px] bg-[#e6e6e6]"],
  ["各省市售电量的多维地图", "w-[217px] bg-[#e6e6e6]"],
  ["各省市售电量混合地图", "w-[199px] bg-[#e6e6e6]"],
  ["各省市售电量混合地图 (2)", "w-[229px] bg-[#fafafa]"],
];

const NEW_TABS = [
  "M10 14H3V3h11v6M6 11.5V9M8.5 11.5V6.500M11 9.5V7.500",
  "M9 14H3V3h11v6M3 8.5h11M8.5 3v11",
  "M8.5 4.5L3 2.500v10.500l5.500 1.500zM8.5 4.5L14 2.500v6.500",
];

function Footer() {
  return (
    <>
      <div className="flex h-[45px] shrink-0 border-t border-[#c9c9c9] bg-[#e6e6e6] text-[18px] tracking-[0.1px] text-[#555]">
        <div className="flex w-[196px] items-center border-r border-[#c4c4c4] pt-px pl-[13px]">
          <svg viewBox="0 0 8 12" className="mr-[7px] mb-[4px] h-3 w-2" fill="none" stroke="#666"><path d="M.7 2.5v7c0 2.500 6.600 2.500 6.600 0v-7c0-2.500-6.600-2.500-6.600 0zM.7 3.5h6.600" /></svg>
          数据源
        </div>
        {TABS.map(([t, c]) => (
          <div key={t} className={`flex items-center border-r border-[#c4c4c4] pt-px pl-[8px] whitespace-nowrap ${c}`}>{t}</div>
        ))}
        {NEW_TABS.map((d) => (
          <div key={d} className="flex w-8 items-center justify-center border-r border-[#c4c4c4]">
            <svg viewBox="0 0 18 18" className="size-[18px]" fill="none" stroke="#666" strokeWidth="1.1">
              <path d={d} />
              <path d="M13.5 9.5v7M10 13h7" strokeWidth="2" />
            </svg>
          </div>
        ))}
        <div className="relative flex-1">
          <div className="absolute right-[9px] -bottom-px text-[16px] leading-5 tracking-[0.05px] whitespace-nowrap text-[#fafafa] [text-shadow:1px_1px_1px_#999] font-['Liberation_Sans',sans-serif]">https://blog.csdn.net/zilongxuan008</div>
        </div>
      </div>
      <div className="flex h-[11px] shrink-0 overflow-hidden border-t border-[#cfcfcf] bg-[#ebebeb] pl-[5px] text-[16px] leading-5 text-black">
        <div className="mt-[4px] flex h-5 w-[1431px] shrink-0 whitespace-nowrap">
          <span className="w-[119px]">248 个标记</span>
          <span className="w-[108px]">1 行 x 1 列</span>
          <span>总和(同期值): 37,248,616</span>
        </div>
        {["w-[189px]", "w-[39px]", "w-[39px]", "w-[69px]", "w-[73px]"].map((w, i) => (
          <div key={i} className={`shrink-0 border-l border-[#c4c4c4] ${w}`} />
        ))}
        <div className="flex flex-1 gap-3 border-l border-[#c4c4c4] pt-[9px] pl-[10px]">
          <div className="h-1 w-[11px] shrink-0 bg-[#aaa]" />
          <div className="h-1 w-[11px] shrink-0 bg-[#aaa]" />
          <div className="h-1 w-[8px] shrink-0 bg-[#444]" />
        </div>
      </div>
    </>
  );
}

export default function App() {
  return (
    <div className={`flex h-[982px] w-[1909px] flex-col overflow-hidden bg-[#f4f4f4] ${UI}`}>
      <TitleBar />
      <MenuBar />
      <Toolbar />
      <div className="flex h-[820px] shrink-0">
        <DataPane />
        <CardsColumn />
        <Worksheet />
      </div>
      <Footer />
    </div>
  );
}
